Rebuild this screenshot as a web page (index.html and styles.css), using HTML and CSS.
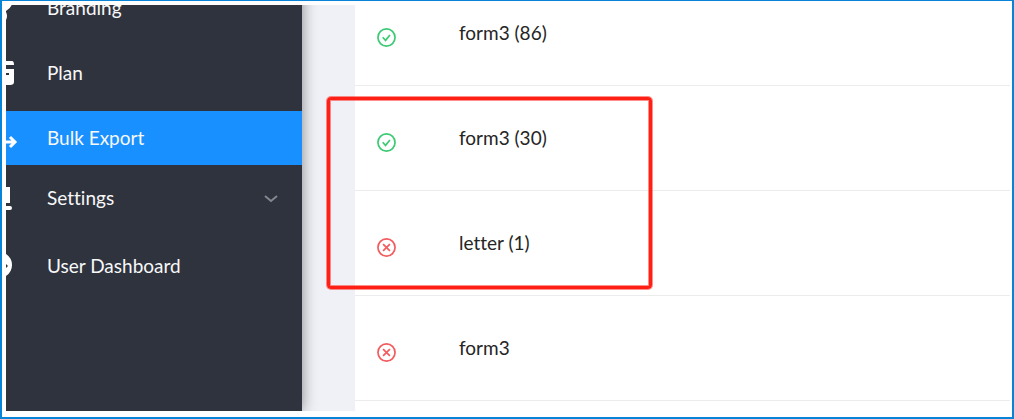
FILE: index.html
```
<!DOCTYPE html>
<html lang="en">
<head>
    <meta charset="UTF-8">
    <meta name="viewport" content="width=device-width, initial-scale=1.0">
    <title>Bulk Export</title>
    <link rel="stylesheet" href="styles.css">
</head>
<body>
    <svg class="symbols" aria-hidden="true">
        <symbol id="ok" viewBox="0 0 20 20">
            <circle cx="10" cy="10" r="9"/>
            <path d="M6 9.7l3 3.3 4.6-5.6"/>
        </symbol>
        <symbol id="fail" viewBox="0 0 20 20">
            <circle cx="10" cy="10" r="9"/>
            <path d="M6.4 6.4l7.2 7.2M13.6 6.4l-7.2 7.2"/>
        </symbol>
    </svg>
    <div class="frame">
        <div class="app">
            <nav class="sidebar">
                <a class="item" href="#">
                    <svg class="icon" viewBox="0 0 13 24"><path d="M0 8h6Q5 12 0 15zM0 16q2 4 0 8z"/></svg>
                    Branding
                </a>
                <a class="item" href="#">
                    <svg class="icon" viewBox="0 0 13 24"><path d="M0 0h6q2 0 2 4H0zM0 8h8v13q0 3-4 3H0V14h3v-2H0z"/></svg>
                    Plan
                </a>
                <a class="item active" href="#">
                    <svg class="icon" viewBox="0 0 13 24"><path d="M0 16h9M4 11l5 5-5 5" class="stroke"/></svg>
                    Bulk Export
                </a>
                <button class="item submenu" type="button">
                    <svg class="icon" viewBox="0 0 13 24"><path d="M0 1h4v16H0zM0 20h4q2 0 2 2t-2 2H0z"/></svg>
                    Settings
                    <svg class="chevron" viewBox="0 0 14 8"><path d="M1 1l6 5 6-5"/></svg>
                </button>
                <a class="item" href="#">
                    <svg class="icon" viewBox="0 0 13 24"><path d="M0 0q6 4 6 11T0 22v-8l2-2-2-2z"/></svg>
                    User Dashboard
                </a>
            </nav>
            <main class="content">
                <table class="exports">
                    <tbody>
                        <tr>
                            <td class="status ok"><svg role="img" aria-label="Completed"><use href="#ok"/></svg></td>
                            <td>form3 (86)</td>
                        </tr>
                        <tr>
                            <td class="status ok"><svg role="img" aria-label="Completed"><use href="#ok"/></svg></td>
                            <td>form3 (30)</td>
                        </tr>
                        <tr>
                            <td class="status fail"><svg role="img" aria-label="Failed"><use href="#fail"/></svg></td>
                            <td>letter (1)</td>
                        </tr>
                        <tr>
                            <td class="status fail"><svg role="img" aria-label="Failed"><use href="#fail"/></svg></td>
                            <td>form3</td>
                        </tr>
                    </tbody>
                </table>
            </main>
            <div class="highlight"></div>
        </div>
    </div>
</body>
</html>
```
FILE: styles.css
```
* {
    box-sizing: border-box;
}
body {
    margin: 0;
    font-family: Lato, sans-serif;
    font-size: 19px;
    font-variant-ligatures: none;
    line-height: 24px;
    background-color: #ffffff;
}
.symbols {
    display: none;
}
.frame {
    display: flex;
    height: 100vh;
    padding: 4px 2px 6px 4px;
    border: 2px solid #0584d8;
    border-top-width: 1px;
}
.app {
    position: relative;
    display: flex;
    flex: 1;
    overflow: hidden;
    background-color: #f0f1f6;
}
.sidebar {
    flex: none;
    width: 296px;
    margin-top: -24px;
    background-color: #2f333e;
    box-shadow: 0 0 14px rgba(0, 0, 0, 0.45);
}
.item {
    display: flex;
    align-items: center;
    width: 100%;
    height: 54px;
    margin: 0 0 11px;
    padding: 0 24px 0 0;
    border: none;
    background: none;
    color: #f8f8f9;
    font: inherit;
    font-variant-ligatures: none;
    text-align: left;
    text-decoration: none;
    cursor: pointer;
}
.item.active {
    margin-bottom: 6px;
    background-color: #1890ff;
}
.item.submenu {
    margin-bottom: 14px;
}
.icon {
    width: 13px;
    height: 24px;
    margin-right: 28px;
    fill: #ffffff;
}
.icon .stroke {
    fill: none;
    stroke: #ffffff;
    stroke-width: 3;
}
.chevron {
    width: 14px;
    height: 8px;
    margin: 2px 0 0 auto;
    fill: none;
    stroke: #85878e;
    stroke-width: 2;
}
.content {
    flex: 1;
    margin-top: -24px;
    margin-left: 53px;
    background-color: #ffffff;
}
.exports {
    width: 100%;
    border-collapse: separate;
    border-spacing: 0;
    color: #252525;
}
.exports td {
    height: 105px;
    padding: 0;
    border-bottom: 1px solid #ececed;
}
.exports .status {
    width: 104px;
    padding: 8px 0 0 22px;
}
.status svg {
    display: block;
    width: 19px;
    height: 19px;
    fill: none;
    stroke: currentColor;
    stroke-width: 1.8;
}
.ok {
    color: #3dca74;
}
.fail {
    color: #f25c5f;
}
.highlight {
    position: absolute;
    top: 92px;
    left: 321px;
    width: 325px;
    height: 192px;
    border: 3px solid #ff2015;
    border-radius: 4px;
    box-shadow: 0 0 0 1px rgba(255, 32, 21, 0.5), inset 0 0 0 1px rgba(255, 32, 21, 0.5);
}
```
